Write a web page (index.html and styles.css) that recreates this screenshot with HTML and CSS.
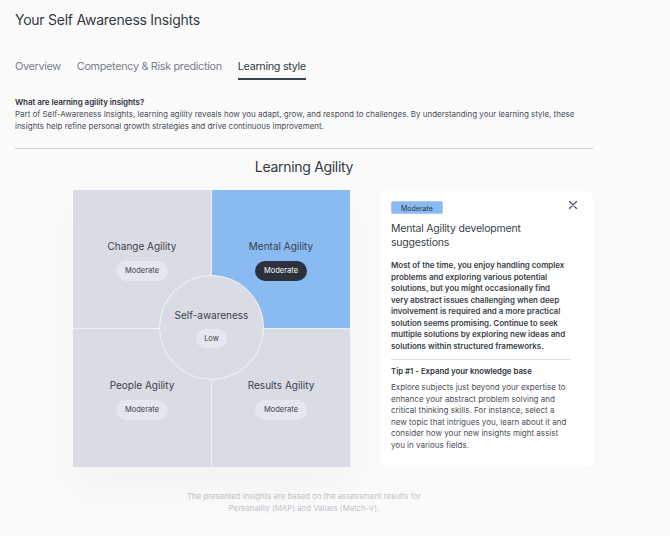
FILE: index.html
```html
<!DOCTYPE html>
<html lang="en">
<head>
<meta charset="utf-8">
<title>Your Self Awareness Insights</title>
<link rel="stylesheet" href="styles.css">
</head>
<body>
<main class="page">
  <h1 class="title">Your Self Awareness Insights</h1>
  <nav class="tabs">
    <span class="tab">Overview</span>
    <span class="tab">Competency &amp; Risk prediction</span>
    <span class="tab active">Learning style</span>
  </nav>
  <section class="intro">
    <h2 class="intro-title">What are learning agility insights?</h2>
    <p class="intro-text">Part of Self-Awareness Insights, learning agility reveals how you adapt, grow, and respond to challenges. By understanding your learning style, these insights help refine personal growth strategies and drive continuous improvement.</p>
  </section>
  <hr class="divider">
  <h2 class="chart-title">Learning Agility</h2>
  <div class="chart-row">
    <div class="grid">
      <div class="quad">
        <span class="quad-label">Change Agility</span>
        <span class="pill">Moderate</span>
      </div>
      <div class="quad selected">
        <span class="quad-label">Mental Agility</span>
        <span class="pill dark">Moderate</span>
      </div>
      <div class="quad">
        <span class="quad-label">People Agility</span>
        <span class="pill">Moderate</span>
      </div>
      <div class="quad">
        <span class="quad-label">Results Agility</span>
        <span class="pill">Moderate</span>
      </div>
      <div class="center">
        <span class="quad-label">Self-awareness</span>
        <span class="pill small">Low</span>
      </div>
    </div>
    <aside class="card">
      <div class="card-head">
        <span class="badge">Moderate</span>
        <svg class="close" width="10" height="10" viewBox="0 0 10 10"><path d="M1.5 1.5 L8.5 8.5 M8.5 1.5 L1.5 8.5" stroke="#4a5260" stroke-width="1.2" stroke-linecap="round"/></svg>
      </div>
      <h3 class="card-title">Mental Agility development suggestions</h3>
      <p class="card-strong">Most of the time, you enjoy handling complex problems and exploring various potential solutions, but you might occasionally find very abstract issues challenging when deep involvement is required and a more practical solution seems promising. Continue to seek multiple solutions by exploring new ideas and solutions within structured frameworks.</p>
      <hr class="card-rule">
      <h4 class="tip-title">Tip #1 - Expand your knowledge base</h4>
      <p class="tip-text">Explore subjects just beyond your expertise to enhance your abstract problem solving and critical thinking skills. For instance, select a new topic that intrigues you, learn about it and consider how your new insights might assist you in various fields.</p>
    </aside>
  </div>
  <p class="footnote">The presented insights are based on the assessment results for<br>Personality (MAP) and Values (Match-V).</p>
</main>
</body>
</html>
```
FILE: styles.css
```css
* { box-sizing: border-box; }
html, body { margin: 0; padding: 0; }
body {
  background: #fafafa;
  font-family: "Inter", "Open Sans", sans-serif;
  color: #3a3f48;
}
.page {
  width: 593px;
  padding: 10px 0 0 15px;
}
.title {
  margin: 0;
  font-size: 14px;
  letter-spacing: -0.25px;
  font-weight: 400;
  line-height: 20px;
  color: #343a44;
}
.tabs {
  display: flex;
  gap: 16px;
  margin-top: 29px;
}
.tab {
  font-size: 10.8px;
  letter-spacing: -0.3px;
  color: #7b8088;
  line-height: 16px;
  padding-bottom: 3px;
}
.tab.active {
  color: #343a44;
  border-bottom: 2px solid #3a4150;
}
.intro { margin-top: 16px; }
.intro-title {
  margin: 0;
  font-size: 8px;
  letter-spacing: -0.05px;
  font-weight: 600;
  line-height: 12px;
  color: #2d323a;
}
.intro-text {
  margin: 0;
  font-size: 8px;
  letter-spacing: -0.02px;
  line-height: 12px;
  color: #4a4f58;
}
.divider {
  border: 0;
  border-top: 1px solid #cdd2dd;
  margin: 16px 0 0 0;
}
.chart-title {
  margin: 8px 0 0 0;
  text-align: center;
  font-size: 14px;
  letter-spacing: -0.3px;
  font-weight: 400;
  line-height: 20px;
  color: #343a44;
}
.chart-row {
  display: flex;
  gap: 30px;
  margin-top: 13px;
  padding-left: 58px;
  align-items: flex-start;
}
.grid {
  position: relative;
  display: grid;
  grid-template-columns: 138px 138px;
  grid-template-rows: 138px 138px;
  gap: 1px;
  width: 277px;
  background: #eef0f4;
  box-shadow: 0 20px 40px rgba(0,0,0,0.03);
}
.quad {
  background: #d9dce5;
  display: flex;
  flex-direction: column;
  align-items: center;
  padding-top: 49px;
  gap: 8px;
}
.quad.selected { background: #89baf2; }
.quad-label {
  font-size: 10px;
  line-height: 14px;
  color: #3a3f48;
}
.pill {
  display: inline-block;
  background: #e4e7ee;
  color: #3a3f48;
  font-size: 7.5px;
  line-height: 20px;
  height: 20px;
  padding: 0 9px;
  border-radius: 10px;
}
.pill.dark {
  background: #2c323d;
  color: #ffffff;
}
.pill.small { padding: 0 8px; height: 19px; line-height: 19px; }
.center {
  position: absolute;
  left: 86px;
  top: 85px;
  width: 105px;
  height: 105px;
  border-radius: 50%;
  background: #d9dce5;
  border: 1px solid #f4f5f8;
  display: flex;
  flex-direction: column;
  align-items: center;
  padding-top: 32px;
  gap: 7px;
}
.card {
  width: 213px;
  height: 276px;
  margin-top: 1px;
  background: #ffffff;
  border-radius: 5px;
  padding: 10px 25px 10px 11px;
}
.card-head {
  display: flex;
  justify-content: space-between;
  align-items: center;
  margin-right: -14px;
}
.badge {
  background: #89baf2;
  color: #2d3440;
  font-size: 7px;
  line-height: 13px;
  height: 13px;
  padding: 0 9px;
  border-radius: 2px;
  border: 1px solid #a8cbf5;
}
.close { margin-top: -5px; margin-right: 4px; }
.card-title {
  margin: 8px 0 0 0;
  font-size: 10.5px;
  letter-spacing: -0.2px;
  font-weight: 400;
  line-height: 14px;
  color: #3a3f48;
}
.card-strong {
  margin: 10px 0 0 0;
  font-size: 8px;
  letter-spacing: -0.04px;
  font-weight: 600;
  line-height: 11.5px;
  color: #3a3f48;
}
.card-rule {
  border: 0;
  border-top: 1px solid #dde0e6;
  margin: 7px -3px 0 0;
}
.tip-title {
  margin: 5px 0 0 0;
  font-size: 7.8px;
  font-weight: 600;
  line-height: 12px;
  color: #2d323a;
}
.tip-text {
  margin: 5px -3px 0 0;
  font-size: 8px;
  line-height: 11.5px;
  color: #4a4f58;
}
.footnote {
  margin: 23px 0 0 0;
  text-align: center;
  font-size: 7.8px;
  line-height: 12px;
  color: #bfc3ca;
}
```
